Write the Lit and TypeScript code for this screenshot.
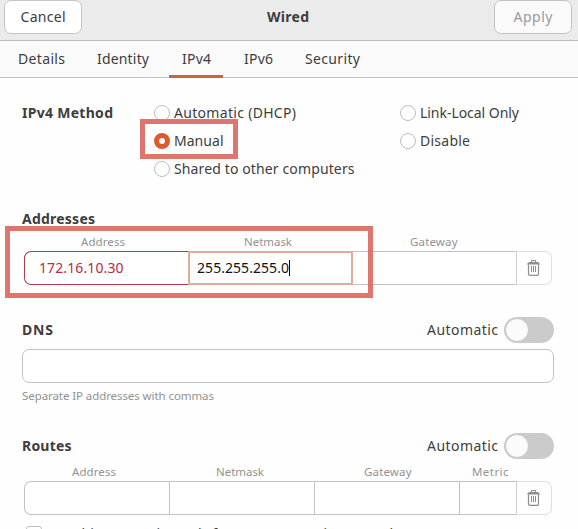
import { LitElement, html, css, svg } from "lit";
import { customElement, property } from "lit/decorators.js";

/** A run of text whose tracking is adjusted so that it fills a given width. */
@customElement("fit-text")
class FitText extends LitElement {
  @property({ type: Number }) w = 0;
  @property() text = "";
  static styles = css`
    :host { display: inline-block; flex: none; white-space: pre; text-align: left; }
    .run { display: inline-block; }
  `;
  updated() {
    const run = this.renderRoot.querySelector(".run") as HTMLElement;
    this.style.width = `${this.w}px`;
    run.style.letterSpacing = "0px";
    const natural = run.getBoundingClientRect().width;
    run.style.letterSpacing = `${(this.w - natural) / Math.max(1, this.text.length - 1)}px`;
  }
  render() {
    return html`<span class="run">${this.text}</span>`;
  }
}

const t = (text: string, w: number) => html`<fit-text .text=${text} .w=${w}></fit-text>`;

const trash = svg`<svg class="trash" width="13" height="16" viewBox="0 0 13 16" fill="none" stroke="#8e8e8e">
  <path d="M4.5 2V1.2Q4.5 .5 5.2 .5H7.8Q8.5 .5 8.5 1.2V2" stroke-width="1.2" />
  <path d="M0 4.6Q.4 2 2.5 2H10.5Q12.6 2 13 4.6Z" fill="#8e8e8e" stroke="none" />
  <path d="M1.5 4.5V13.5Q1.5 15.4 3.4 15.4H9.6Q11.5 15.4 11.5 13.5V4.5" stroke-width="1.2" />
  <path d="M4.5 6V12M6.5 6V12M8.5 6V12" />
</svg>`;

@customElement("app-root")
class AppRoot extends LitElement {
  static styles = css`
    :host {
      display: block; position: relative; width: 578px; height: 529px; overflow: hidden;
      background: #fefefe; color: #3d3d3d;
      font: 14px/20px "Noto Sans", "Open Sans", sans-serif;
    }
    * { box-sizing: border-box; }
    .header {
      display: flex; justify-content: space-between; align-items: flex-start;
      height: 41px; padding: 0 6px 0 4px; background: #ebebeb; border-bottom: 1px solid #bdbdbd;
    }
    .btn {
      display: flex; align-items: center; justify-content: center; width: 78px; height: 34px;
      background: #fff; border: 1px solid #c4c4c4; border-radius: 7px;
    }
    .btn.off { background: #fafafa; color: #9b9b9b; }
    .title { height: 34px; display: flex; align-items: center; }
    b, .title { font-weight: 700; }
    .tabs {
      display: grid; grid-template-columns: 79px 85px 62px 61px 80px; padding-left: 5px;
      height: 37px; background: #fafafa; border-bottom: 1px solid #c2c2c2;
    }
    .tab { height: 37px; padding: 8px 0 0 13px; width: 54px; }
    .tab.on { border-bottom: 3px solid #cb6341; }
    .content { padding: 21px 24px 0 22px; }
    .methods { display: grid; grid-template-columns: 132px 246px 1fr; grid-auto-rows: 28px; align-items: center; }
    .radio { display: flex; align-items: center; gap: 4px; }
    .dot { width: 16px; height: 16px; border: 1px solid #bdbdbd; border-radius: 50%; background: #fff; }
    .dot.on { border: 5.5px solid #df5a2b; }
    .section { display: flex; height: 20px; margin-top: 26px; }
    .labels { display: grid; height: 18px; margin-top: 4px; font-size: 11.5px; line-height: 18px; color: #929292; }
    .labels.addr { grid-template-columns: 163px 166px 1fr; padding-left: 59px; }
    .labels.route { grid-template-columns: 144px 148px 108px 1fr; padding-left: 50px; }
    .row { display: grid; height: 34px; margin: 0 2px; }
    .row.addr { grid-template-columns: 164px 165px 163px 36px; }
    .row.route { grid-template-columns: 145px 145px 145px 57px 36px; }
    .cell { display: flex; align-items: center; border: 1px solid #c2c2c2; border-width: 1px 0 1px 1px; background: #fff; }
    .cell:first-child { border-radius: 7px 0 0 7px; }
    .cell.error { border-color: #ab3a4c; color: #bd2a3c; padding-left: 14px; }
    .cell.focus { border: 2px solid #e0ad9a; color: #111; padding-left: 7px; }
    .cell.plain { border-left: 0; }
    .caret { width: 1px; height: 16px; background: #000; }
    .cell.del { justify-content: center; border: 1px solid #dedede; border-left-color: #cecece; border-radius: 0 7px 7px 0; padding-right: 1px; }
    .head { display: flex; align-items: center; justify-content: space-between; height: 26px; }
    .head.dns { margin-top: 32px; }
    .head.routes { margin-top: 28px; }
    .auto { display: flex; align-items: center; gap: 6px; }
    .switch { width: 50px; height: 26px; padding: 1px; border-radius: 13px; background: #cbcbcb; }
    .knob { width: 24px; height: 24px; border-radius: 50%; background: #fbfbfb; border: 1px solid #c6c6c6; }
    .entry { height: 34px; margin-top: 6px; border: 1px solid #c2c2c2; border-radius: 7px; background: #fff; }
    .hint { height: 18px; margin-top: 4px; font-size: 11.5px; line-height: 18px; color: #929292; }
    .only { display: flex; gap: 6px; margin: 9px 0 0 4px; align-items: flex-start; }
    .check { width: 16px; height: 16px; margin-top: 2px; border: 1px solid #bdbdbd; border-radius: 3px; background: #fff; }
    .mark { position: absolute; border: 5px solid #dd766f; }
    .mark.manual { left: 140px; top: 119px; width: 98px; height: 40px; }
    .mark.address { left: 5px; top: 226px; width: 368px; height: 72px; }
    .trash { display: block; }
  `;

  private radio(text: string, w: number, on = false) {
    return html`<div class="radio"><span class="dot ${on ? "on" : ""}"></span>${t(text, w)}</div>`;
  }

  private auto() {
    return html`<div class="auto">${t("Automatic", 71)}<div class="switch"><div class="knob"></div></div></div>`;
  }

  render() {
    const tabs: [string, number][] = [["Details", 47], ["Identity", 52], ["IPv4", 29], ["IPv6", 29], ["Security", 55]];
    return html`
      <div class="header">
        <div class="btn">${t("Cancel", 45)}</div>
        <div class="title">${t("Wired", 42)}</div>
        <div class="btn off">${t("Apply", 39)}</div>
      </div>
      <div class="tabs">
        ${tabs.map(([n, w]) => html`<div class="tab ${n === "IPv4" ? "on" : ""}">${t(n, w)}</div>`)}
      </div>
      <div class="content">
        <div class="methods">
          <b>${t("IPv4 Method", 91)}</b>${this.radio("Automatic (DHCP)", 122)}${this.radio("Link-Local Only", 99)}
          <span></span>${this.radio("Manual", 49.5, true)}${this.radio("Disable", 50)}
          <span></span>${this.radio("Shared to other computers", 180.5)}
        </div>
        <div class="section"><b>${t("Addresses", 73)}</b></div>
        <div class="labels addr">${t("Address", 44)}${t("Netmask", 48)}${t("Gateway", 47.5)}</div>
        <div class="row addr">
          <div class="cell error">${t("172.16.10.30", 84.5)}</div>
          <div class="cell focus">${t("255.255.255.0", 92)}<span class="caret"></span></div>
          <div class="cell plain"></div>
          <div class="cell del">${trash}</div>
        </div>
        <div class="head dns"><b>${t("DNS", 31)}</b>${this.auto()}</div>
        <div class="entry"></div>
        <div class="hint">${t("Separate IP addresses with commas", 192)}</div>
        <div class="head routes"><b>${t("Routes", 49.5)}</b>${this.auto()}</div>
        <div class="labels route">${t("Address", 44)}${t("Netmask", 48)}${t("Gateway", 47.5)}${t("Metric", 36.5)}</div>
        <div class="row route">
          <div class="cell"></div><div class="cell"></div><div class="cell"></div><div class="cell"></div>
          <div class="cell del">${trash}</div>
        </div>
        <div class="only"><span class="check"></span>${t("Use this connection only for resources on its network", 349)}</div>
      </div>
      <div class="mark manual"></div>
      <div class="mark address"></div>
    `;
  }
}
